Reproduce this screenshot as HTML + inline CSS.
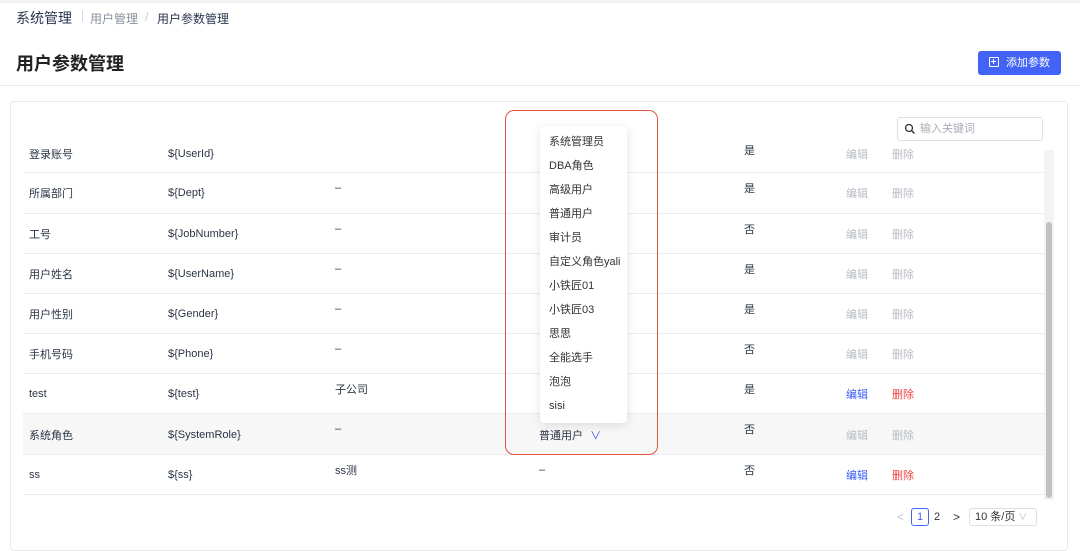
<!DOCTYPE html>
<html><head><meta charset="utf-8"><style>
*{margin:0;padding:0;box-sizing:border-box}
body{width:1080px;height:543px;background:#fff;font-family:"Liberation Sans","Noto Sans CJK SC",sans-serif;color:#2b3445;position:relative;overflow:hidden;font-size:11px}
.a{position:absolute;white-space:nowrap}
.row{position:absolute;left:23px;width:1021px;border-bottom:1px solid #ebedf0}
.t{position:absolute;transform:translateY(-50%)}
.g{color:#b8bcc4}.b{color:#3b5bf5}.r{color:#f04343}
.dd div{height:24px;line-height:24px;padding-left:9px;font-size:11px;color:#333}
</style></head><body>
<div class="a" style="left:0;top:0;width:1080px;height:3px;background:#f0f1f3"></div>
<div class="a" style="left:16px;top:8px;font-size:14px;color:#2b3550">系统管理</div>
<div class="a" style="left:82px;top:10px;width:1px;height:12px;background:#d5d8de"></div>
<div class="a" style="left:90px;top:10px;font-size:12px;color:#8a909c">用户管理</div>
<div class="a" style="left:145px;top:10px;font-size:12px;color:#c0c4cc">/</div>
<div class="a" style="left:157px;top:10px;font-size:12px;color:#2b3550">用户参数管理</div>
<div class="a" style="left:16px;top:50px;font-size:18px;font-weight:bold;color:#222">用户参数管理</div>
<div class="a" style="left:978px;top:51px;width:83px;height:24px;background:#4263f5;border-radius:3px;color:#fff;font-size:11px;line-height:24px;padding-left:28px">添加参数</div>
<div class="a" style="left:989px;top:57px;width:10px;height:10px;border:1px solid #fff;border-radius:1px"></div>
<div class="a" style="left:993px;top:59px;width:1px;height:5px;background:#fff"></div>
<div class="a" style="left:991px;top:61px;width:5px;height:1px;background:#fff"></div>
<div class="a" style="left:0;top:85px;width:1080px;height:1px;background:#e8eaee"></div>
<div class="a" style="left:10px;top:101px;width:1058px;height:450px;border:1px solid #e6e8eb;border-radius:4px"></div>

<div class="row" style="top:140px;height:33px"><span class="t" style="left:6px;top:14px">登录账号</span><span class="t" style="left:145px;top:14px">${UserId}</span><span class="t" style="left:721px;top:10px">是</span><span class="t g" style="left:823px;top:14px">编辑</span><span class="t g" style="left:869px;top:14px">删除</span></div>
<div class="a" style="left:12px;top:102px;width:1040px;height:43px;background:#fff"></div>
<div class="a" style="left:897px;top:117px;width:146px;height:24px;border:1px solid #dcdfe6;border-radius:3px;color:#a8adb6;font-size:11px;line-height:22px;padding-left:22px">输入关键词</div>
<svg class="a" style="left:904px;top:123px" width="12" height="12" viewBox="0 0 12 12"><circle cx="5" cy="5" r="3.5" fill="none" stroke="#333" stroke-width="1.3"/><path d="M7.5 7.5L10.5 10.5" stroke="#333" stroke-width="1.4"/></svg>

<div class="row" style="top:173px;height:41px"><span class="t" style="left:6px;top:20px">所属部门</span><span class="t" style="left:145px;top:20px">${Dept}</span><span class="t" style="left:312px;top:15px">–</span><span class="t" style="left:721px;top:15px">是</span><span class="t g" style="left:823px;top:20px">编辑</span><span class="t g" style="left:869px;top:20px">删除</span></div>
<div class="row" style="top:214px;height:40px"><span class="t" style="left:6px;top:20px">工号</span><span class="t" style="left:145px;top:20px">${JobNumber}</span><span class="t" style="left:312px;top:15px">–</span><span class="t" style="left:721px;top:15px">否</span><span class="t g" style="left:823px;top:20px">编辑</span><span class="t g" style="left:869px;top:20px">删除</span></div>
<div class="row" style="top:254px;height:40px"><span class="t" style="left:6px;top:20px">用户姓名</span><span class="t" style="left:145px;top:20px">${UserName}</span><span class="t" style="left:312px;top:15px">–</span><span class="t" style="left:721px;top:15px">是</span><span class="t g" style="left:823px;top:20px">编辑</span><span class="t g" style="left:869px;top:20px">删除</span></div>
<div class="row" style="top:294px;height:40px"><span class="t" style="left:6px;top:20px">用户性别</span><span class="t" style="left:145px;top:20px">${Gender}</span><span class="t" style="left:312px;top:15px">–</span><span class="t" style="left:721px;top:15px">是</span><span class="t g" style="left:823px;top:20px">编辑</span><span class="t g" style="left:869px;top:20px">删除</span></div>
<div class="row" style="top:334px;height:40px"><span class="t" style="left:6px;top:20px">手机号码</span><span class="t" style="left:145px;top:20px">${Phone}</span><span class="t" style="left:312px;top:15px">–</span><span class="t" style="left:721px;top:15px">否</span><span class="t g" style="left:823px;top:20px">编辑</span><span class="t g" style="left:869px;top:20px">删除</span></div>
<div class="row" style="top:374px;height:40px"><span class="t" style="left:6px;top:20px">test</span><span class="t" style="left:145px;top:20px">${test}</span><span class="t" style="left:312px;top:15px">子公司</span><span class="t" style="left:721px;top:15px">是</span><span class="t b" style="left:823px;top:20px">编辑</span><span class="t r" style="left:869px;top:20px">删除</span></div>
<div class="row" style="top:414px;height:41px;background:#f7f7f8"><span class="t" style="left:6px;top:21px">系统角色</span><span class="t" style="left:145px;top:21px">${SystemRole}</span><span class="t" style="left:312px;top:15px">–</span><span class="t" style="left:516px;top:21px">普通用户 <span style="color:#3b5bf5;margin-left:4px">∨</span></span><span class="t" style="left:721px;top:15px">否</span><span class="t g" style="left:823px;top:21px">编辑</span><span class="t g" style="left:869px;top:21px">删除</span></div>
<div class="row" style="top:455px;height:40px"><span class="t" style="left:6px;top:20px">ss</span><span class="t" style="left:145px;top:20px">${ss}</span><span class="t" style="left:312px;top:15px">ss测</span><span class="t" style="left:516px;top:15px">–</span><span class="t" style="left:721px;top:15px">否</span><span class="t b" style="left:823px;top:20px">编辑</span><span class="t r" style="left:869px;top:20px">删除</span></div>

<div class="a" style="left:1044px;top:150px;width:10px;height:350px;background:#f3f3f4"></div>
<div class="a" style="left:1046px;top:222px;width:6px;height:276px;background:#c1c1c1;border-radius:3px"></div>

<div class="a" style="left:897px;top:510px;color:#c0c4cc;font-size:12px">&lt;</div>
<div class="a" style="left:911px;top:508px;width:18px;height:18px;border:1px solid #4263f5;border-radius:3px;color:#4263f5;text-align:center;line-height:16px;font-size:11px">1</div>
<div class="a" style="left:934px;top:511px;font-size:11px;color:#333">2</div>
<div class="a" style="left:953px;top:510px;font-size:12px;color:#333">&gt;</div>
<div class="a" style="left:969px;top:508px;width:68px;height:18px;border:1px solid #dcdfe6;border-radius:3px;line-height:16px;padding-left:5px;font-size:11px;color:#333">10 条/页 <span style="color:#bbb;font-size:9px">∨</span></div>

<div class="a" style="left:505px;top:110px;width:153px;height:345px;border:1.5px solid #e8553f;border-radius:9px"></div>
<div class="a dd" style="left:540px;top:126px;width:87px;height:297px;background:#fff;border-radius:4px;box-shadow:0 2px 10px rgba(0,0,0,0.12);padding-top:4px">
<div>系统管理员</div><div>DBA角色</div><div>高级用户</div><div>普通用户</div><div>审计员</div><div>自定义角色yali</div><div>小铁匠01</div><div>小铁匠03</div><div>思思</div><div>全能选手</div><div>泡泡</div><div>sisi</div>
</div>
</body></html>
